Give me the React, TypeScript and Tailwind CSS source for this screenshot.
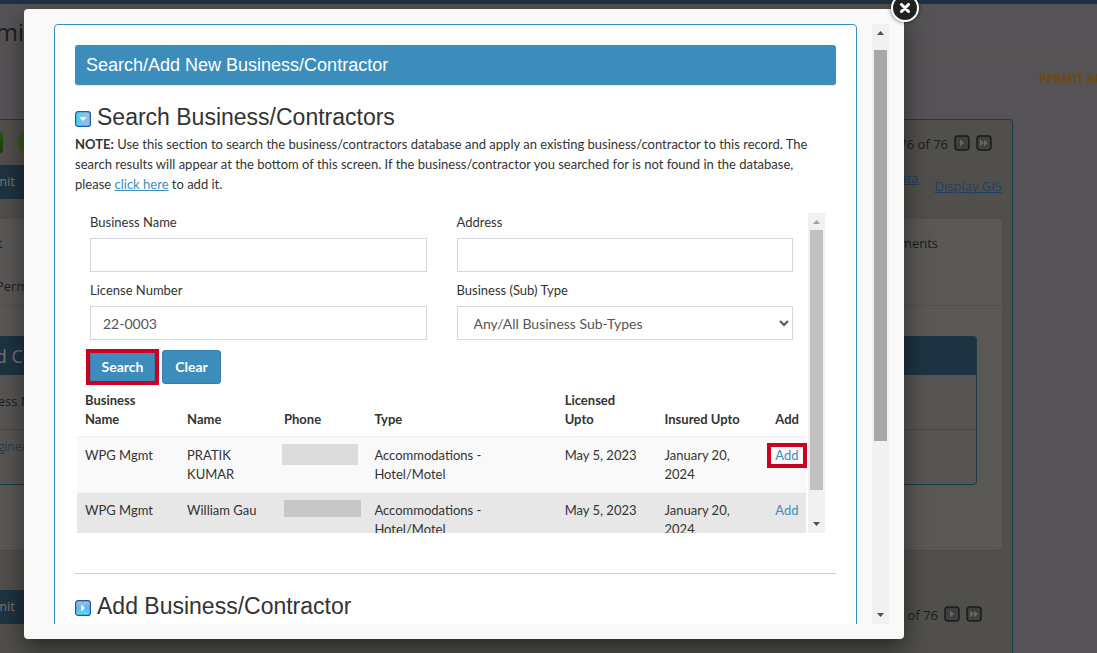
import { ReactNode, useState } from "react";

const results = [
  {
    business: "WPG Mgmt",
    name: "PRATIK KUMAR",
    type: "Accommodations - Hotel/Motel",
    licensed: "May 5, 2023",
    insured: "January 20, 2024",
  },
  {
    business: "WPG Mgmt",
    name: "William Gau",
    type: "Accommodations - Hotel/Motel",
    licensed: "May 5, 2023",
    insured: "January 20, 2024",
  },
];

function ScrollBar({ thumb, upColor }: { thumb: ReactNode; upColor: string }) {
  return (
    <div className="flex w-[17px] shrink-0 flex-col bg-[#f1f1f1]" aria-hidden="true">
      <svg className="h-[17px] w-[17px] shrink-0" viewBox="0 0 17 17">
        <path d="M5 11h7L8.500 7z" fill={upColor} />
      </svg>
      <div className="min-h-0 flex-1 px-[2px]">{thumb}</div>
      <svg className="h-[17px] w-[17px] shrink-0" viewBox="0 0 17 17">
        <path d="M5 6h7L8.500 10z" fill="#505050" />
      </svg>
    </div>
  );
}

function ToggleIcon({ open }: { open: boolean }) {
  return (
    <svg className="mt-1 h-4 w-4 shrink-0" viewBox="0 0 16 16" aria-hidden="true">
      <defs>
        <linearGradient id={open ? "tgOpen" : "tgClosed"} x1="0" y1="0" x2={open ? "1" : "0"} y2={open ? "0" : "1"}>
          <stop offset="0" stopColor={open ? "#3fd4f8" : "#a9b9dc"} />
          <stop offset="0.5" stopColor={open ? "#7cc6ee" : "#62b8e6"} />
          <stop offset="1" stopColor={open ? "#a9b4dc" : "#4fe6ff"} />
        </linearGradient>
      </defs>
      <rect
        x="0.600"
        y="0.600"
        width="14.800"
        height="14.800"
        rx="2.500"
        fill={`url(#${open ? "tgOpen" : "tgClosed"})`}
        stroke="#1c58a8"
        strokeWidth="1.200"
      />
      <path d={open ? "M4.500 6.200h7L8 10z" : "M6.200 4.500v7L10 8z"} fill="#fff" />
    </svg>
  );
}

function Pager({ label }: { label: string }) {
  return (
    <div className="flex items-center gap-[6px]">
      <span className="pt-[3px] leading-5 text-[#1d1c1d]">{label}</span>
      {["M6 4.500v7L10 8z", "M4 4.500v7L8 8zM8 4.500v7L12 8z"].map((d) => (
        <svg key={d} className="h-4 w-4" viewBox="0 0 16 16" aria-hidden="true">
          <rect x="1" y="1" width="14" height="14" rx="3" fill="#403f3e" stroke="#1b1b1b" strokeWidth="1.500" />
          <path d={d} fill="#666" />
        </svg>
      ))}
    </div>
  );
}

function PermitPage() {
  return (
    <div className="flex h-screen flex-col overflow-hidden bg-[#565356] font-['Open_Sans',sans-serif] text-[13px] text-[#1d1c1d]">
      <div className="h-1 shrink-0 bg-[#1e3341]" />
      <div className="flex h-[57px] shrink-0 items-center border-b border-[#5a5552]">
        <h1 className="-ml-[42px] text-2xl">Permit</h1>
      </div>
      <div className="flex h-[58px] shrink-0 justify-end pt-2">
        <span className="-mr-[70px] text-xs leading-5 font-bold whitespace-nowrap text-[#6e4a12]">
          PERMIT APPLICATION
        </span>
      </div>
      <div className="mr-[84px] flex flex-1 flex-col rounded-tr-sm border-t border-r border-[#1e3b4e] bg-[#504f4b]">
        <div className="flex h-[45px] shrink-0 items-center justify-between pr-5">
          <div className="flex items-center gap-[14px]">
            <span className="h-[21px] w-[3px] rounded-r-sm bg-linear-to-b from-[#2c5413] to-[#1d3a0e]" />
            <span className="h-[22px] w-[22px] rounded-full bg-[#3c5620]" />
          </div>
          <Pager label="76 of 76" />
        </div>
        <div className="flex h-[54px] shrink-0 items-start justify-between pr-[10px]">
          <div className="flex h-[34px] w-20 items-center bg-[#1e3341] text-[#77736f]">
            <span className="-ml-7">Submit</span>
          </div>
          <div className="flex gap-4 text-[#22405f]">
            <a href="#data" className="pt-1 underline">
              Data
            </a>
            <a href="#gis" className="pt-3 underline">
              Display GIS
            </a>
          </div>
        </div>
        <div className="mr-[10px] h-[332px] shrink-0 rounded-r border-b border-[#4c4a47] bg-[#5a5855]">
          <div className="flex h-[87px] flex-col border-b border-[#524f4c] pt-[15px]">
            <div className="flex justify-between pr-16">
              <span className="-ml-[38px]">Permit</span>
              <span>Comments</span>
            </div>
            <div className="pt-[23px]">
              <span className="-ml-1">Permit</span>
            </div>
          </div>
          <div className="mt-[30px] mr-[25px] rounded-r border-r border-b border-[#1e3b4e] bg-[#575553]">
            <div className="flex h-[39px] items-center rounded-tr bg-[#1e3341] text-lg text-[#77736f]">
              <span className="-ml-[104px] whitespace-nowrap">Business and Contractors</span>
            </div>
            <div className="flex h-[55px] items-center border-b border-[#4a4846]">
              <span className="-ml-9">Business Name</span>
            </div>
            <div className="h-[54px] pt-[9px] text-xs text-[#2b3b4b]">
              <span className="-ml-4">Engineering</span>
            </div>
          </div>
        </div>
        <div className="flex justify-between pt-[39px] pr-[30px]">
          <div className="flex h-[34px] w-20 items-center bg-[#1e3341] text-[#77736f]">
            <span className="-ml-7">Submit</span>
          </div>
          <div className="pt-3">
            <Pager label="76 of 76" />
          </div>
        </div>
      </div>
    </div>
  );
}

function Field({ id, label, children }: { id: string; label: string; children: ReactNode }) {
  return (
    <div className="flex flex-col gap-[6px]">
      <label htmlFor={id} className="leading-[19px]">
        {label}
      </label>
      {children}
    </div>
  );
}

const control = "h-[34px] w-full border border-[#d2d6de] bg-white px-3 text-sm text-[#555]";
const button = "h-[34px] rounded-[3px] border border-[#367fa9] bg-[#3c8dbc] text-sm font-bold text-white";

function SearchPanel() {
  const [license, setLicense] = useState("22-0003");

  return (
    <div className="mr-[11px] ml-[2px] flex h-[320px]">
      <div className="min-w-0 flex-1 overflow-hidden">
        <form className="pr-[15px] pl-[13px]">
          <div className="grid grid-cols-2 gap-x-[30px] gap-y-[9px]">
            <Field id="business" label="Business Name">
              <input id="business" type="text" className={control} />
            </Field>
            <Field id="address" label="Address">
              <input id="address" type="text" className={control} />
            </Field>
            <Field id="license" label="License Number">
              <input
                id="license"
                type="text"
                className={control}
                value={license}
                onChange={(e) => setLicense(e.target.value)}
              />
            </Field>
            <Field id="subtype" label="Business (Sub) Type">
              <select id="subtype" className={control}>
                <option>Any/All Business Sub-Types</option>
              </select>
            </Field>
          </div>
          <div className="flex gap-[7px] pt-[10px]">
            <button type="button" className={`${button} relative w-[65px]`}>
              Search
              <span className="absolute -inset-x-[5px] -inset-y-[2px] border-4 border-[#cb0022]" />
            </button>
            <button type="button" className={`${button} w-[59px]`}>
              Clear
            </button>
          </div>
        </form>

        <div className="pr-[2px]">
          <table className="w-full table-fixed border-collapse text-left leading-[19px]">
            <colgroup>
              <col className="w-[14%]" />
              <col className="w-[13.300%]" />
              <col className="w-[12.400%]" />
              <col className="w-[26.100%]" />
              <col className="w-[13.700%]" />
              <col className="w-[15.200%]" />
              <col />
            </colgroup>
            <thead>
              <tr className="border-b-2 border-[#f4f4f4] align-bottom">
                <th className="px-2 py-[7px] font-bold">
                  Business
                  <br />
                  Name
                </th>
                <th className="px-2 py-[7px] font-bold">Name</th>
                <th className="px-2 py-[7px] font-bold">Phone</th>
                <th className="px-2 py-[7px] font-bold">Type</th>
                <th className="px-2 py-[7px] font-bold">
                  Licensed
                  <br />
                  Upto
                </th>
                <th className="px-2 py-[7px] font-bold">Insured Upto</th>
                <th className="px-2 py-[7px] font-bold">Add</th>
              </tr>
            </thead>
            <tbody>
              {results.map((row, i) => (
                <tr
                  key={row.name}
                  className={i === 0 ? "bg-[#f9f9f9] align-top" : "border-t border-[#f4f4f4] bg-[#e7e7e7] align-top"}
                >
                  <td className="p-2">{row.business}</td>
                  <td className="p-2">{row.name}</td>
                  <td className={i === 0 ? "py-[6px] pl-[6px]" : "py-[7px] pl-2"}>
                    <div className={i === 0 ? "h-[21px] w-[76px] bg-[#dbdbdb]" : "h-[17px] w-[77px] bg-[#c7c7c7]"} />
                  </td>
                  <td className="p-2">{row.type}</td>
                  <td className="p-2">{row.licensed}</td>
                  <td className="py-2 pr-6 pl-2">{row.insured}</td>
                  <td className="p-2">
                    <a href="#add" className="relative inline-block text-[#3c8dbc]">
                      Add
                      {i === 0 && <span className="absolute -inset-x-2 -inset-y-[3px] border-4 border-[#cb0022]" />}
                    </a>
                  </td>
                </tr>
              ))}
            </tbody>
          </table>
        </div>
      </div>
      <ScrollBar thumb={<div className="h-[91%] bg-[#c1c1c1]" />} upColor="#a3a3a3" />
    </div>
  );
}

export default function App() {
  return (
    <>
      <PermitPage />

      <div
        role="dialog"
        aria-label="Search/Add New Business/Contractor"
        className="fixed inset-0 flex pt-[9px] pr-[193px] pb-[14px] pl-6 font-['Lato',sans-serif] text-[13px] text-[#333]"
      >
        <div className="relative flex flex-1 rounded bg-[#f9f9f9] p-[15px] shadow-[0_10px_25px_rgba(0,0,0,0.5)]">
          <div className="flex min-w-0 flex-1 overflow-hidden">
            <div className="flex-1 overflow-hidden px-[15px]">
              <div className="rounded border border-[#3c8dbc] bg-white p-5">
                <div className="flex h-10 items-center rounded-[3px] bg-[#3c8dbc] px-[11px] font-['Liberation_Sans',Arial,sans-serif] text-lg text-white shadow-[0_1px_1px_rgba(0,0,0,0.1)]">
                  Search/Add New Business/Contractor
                </div>

                <h2 className="mt-[18px] flex items-center gap-[6px] font-['Liberation_Sans',Arial,sans-serif] text-[23px] leading-7">
                  <ToggleIcon open />
                  Search Business/Contractors
                </h2>
                <p className="mt-[3px] leading-5">
                  <b>NOTE:</b> Use this section to search the business/contractors database and apply an existing
                  business/contractor to this record. The
                  <br />
                  search results will appear at the bottom of this screen. If the business/contractor you searched for
                  is not found in the database,
                  <br />
                  please{" "}
                  <a href="#add-business" className="text-[#3c8dbc] underline">
                    click here
                  </a>{" "}
                  to add it.
                </p>

                <div className="pt-[19px]">
                  <SearchPanel />
                </div>

                <hr className="mt-10 border-[#ccc]" />

                <h2
                  id="add-business"
                  className="mt-[18px] mb-10 flex items-center gap-[6px] font-['Liberation_Sans',Arial,sans-serif] text-[23px] leading-7"
                >
                  <ToggleIcon open={false} />
                  Add Business/Contractor
                </h2>
              </div>
            </div>
            <ScrollBar thumb={<div className="mt-[9px] h-[69%] bg-[#a8a8a8]" />} upColor="#505050" />
          </div>

          <button
            type="button"
            aria-label="Close"
            className="absolute -top-[15px] -right-[15px] flex h-7 w-7 items-center justify-center rounded-full border-2 border-white bg-[#222] shadow-[0_0_4px_rgba(0,0,0,0.6)]"
          >
            <svg className="h-[10px] w-[10px]" viewBox="0 0 10 10" aria-hidden="true">
              <path d="M1.500 1.500l7 7M8.500 1.500l-7 7" stroke="#fff" strokeWidth="3" strokeLinecap="round" />
            </svg>
          </button>
        </div>
      </div>
    </>
  );
}
